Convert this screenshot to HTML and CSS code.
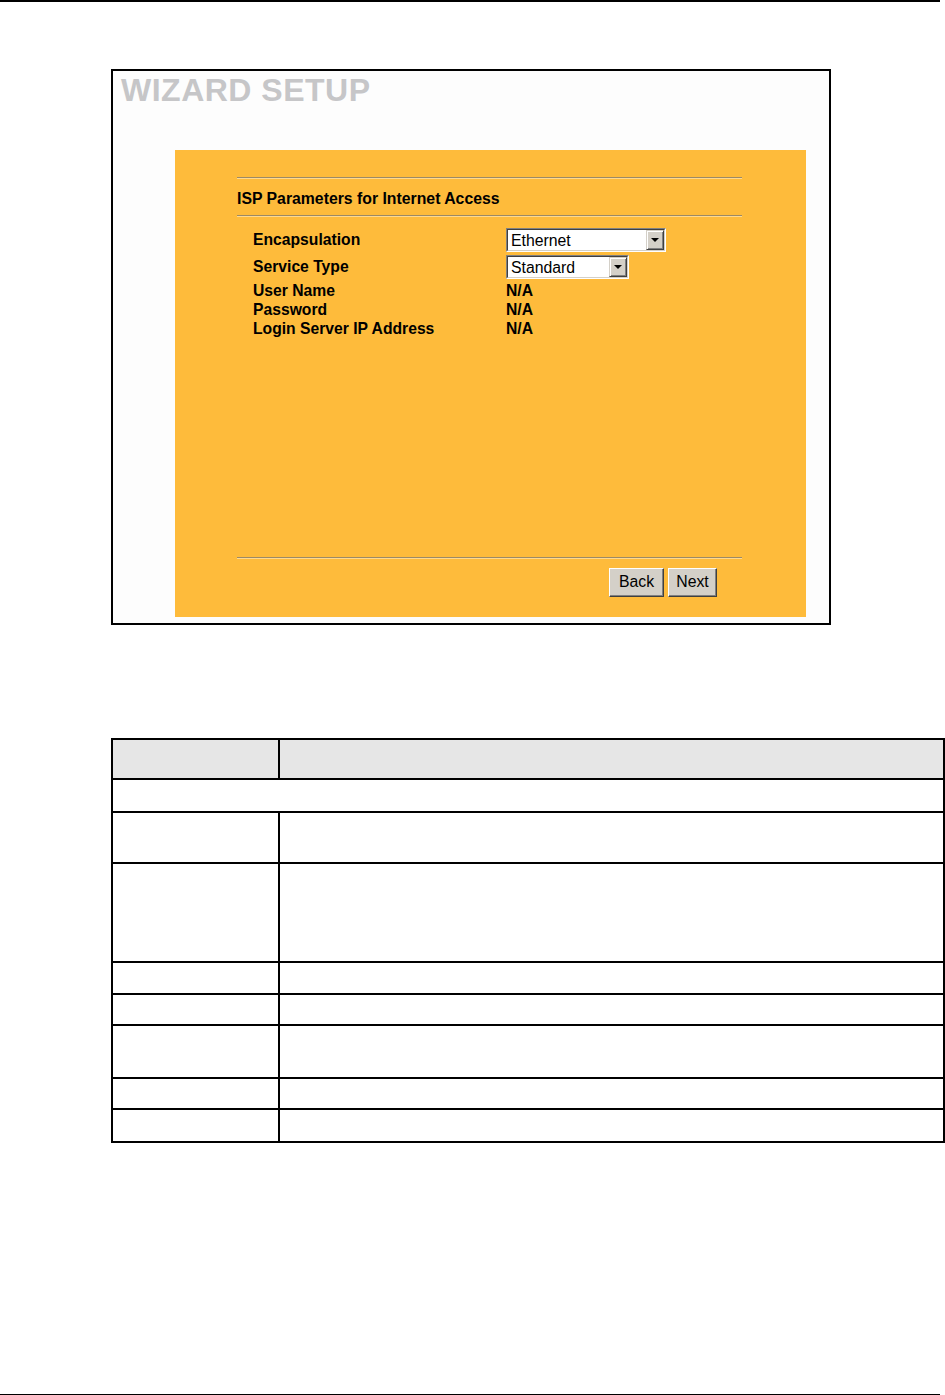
FILE: index.html
```html
<!DOCTYPE html>
<html>
<head>
<meta charset="utf-8">
<link rel="stylesheet" href="styles.css">
</head>
<body>
<div class="page">
  <div class="top-rule"></div>

  <div class="wizard">
    <div class="wizard-title">WIZARD SETUP</div>
    <div class="panel">
      <div class="rule"></div>
      <div class="heading">ISP Parameters for Internet Access</div>
      <div class="rule"></div>
      <div class="form">
        <div class="label sel-row">Encapsulation</div>
        <div class="value sel-row">
          <div class="select w160"><div class="select-in"><span class="select-text">Ethernet</span><span class="drop"><i class="arrow"></i></span></div></div>
        </div>
        <div class="label sel-row second">Service Type</div>
        <div class="value sel-row second">
          <div class="select w123"><div class="select-in"><span class="select-text">Standard</span><span class="drop"><i class="arrow"></i></span></div></div>
        </div>
        <div class="label text-row first-text">User Name</div>
        <div class="value text-row first-text">N/A</div>
        <div class="label text-row">Password</div>
        <div class="value text-row">N/A</div>
        <div class="label text-row">Login Server IP Address</div>
        <div class="value text-row">N/A</div>
      </div>
      <div class="footer">
        <div class="rule"></div>
        <div class="buttons">
          <div class="btn w55">Back</div>
          <div class="btn w49">Next</div>
        </div>
      </div>
    </div>
  </div>

  <table class="desc">
    <tr class="h40 head"><td class="c1"></td><td></td></tr>
    <tr class="h33"><td colspan="2"></td></tr>
    <tr class="h51"><td class="c1"></td><td></td></tr>
    <tr class="h99"><td class="c1"></td><td></td></tr>
    <tr class="h32"><td class="c1"></td><td></td></tr>
    <tr class="h31"><td class="c1"></td><td></td></tr>
    <tr class="h53"><td class="c1"></td><td></td></tr>
    <tr class="h31"><td class="c1"></td><td></td></tr>
    <tr class="h33"><td class="c1"></td><td></td></tr>
  </table>

  <div class="bottom-rule"></div>
</div>
</body>
</html>
```

FILE: styles.css
```css
html, body {
  margin: 0;
  padding: 0;
  background: #ffffff;
}
body {
  font-family: "Liberation Sans", Arial, sans-serif;
  color: #000;
}
.page {
  width: 945px;
  height: 1395px;
  overflow: hidden;
}
.top-rule {
  width: 940px;
  height: 2px;
  background: #000;
}
.wizard {
  margin: 67px 0 0 111px;
  width: 720px;
  height: 556px;
  box-sizing: border-box;
  border: 2px solid #000;
  background: #fdfdfd;
}
.wizard-title {
  margin: 1px 0 0 8px;
  font-size: 32px;
  line-height: 36px;
  font-weight: bold;
  letter-spacing: 0.5px;
  color: #c6c6c8;
}
.panel {
  margin: 42px 0 0 62px;
  width: 631px;
  height: 467px;
  box-sizing: border-box;
  background: #febb3b;
  padding: 27px 64px 20px 62px;
  display: flex;
  flex-direction: column;
}
.rule {
  height: 0;
  border-top: 1px solid #9c8a66;
  border-bottom: 1px solid #ffd98e;
}
.heading {
  margin: 10px 0 7px 0;
  font-size: 15.8px;
  line-height: 19px;
  font-weight: bold;
}
.form {
  margin-top: 11px;
  padding-left: 16px;
  display: grid;
  grid-template-columns: 253px 1fr;
  font-size: 15.7px;
  font-weight: bold;
}
.sel-row {
  height: 24px;
  display: flex;
  align-items: center;
}
.sel-row.second {
  margin-top: 3px;
}
.text-row {
  height: 19px;
  line-height: 19px;
}
.text-row.first-text {
  margin-top: 2px;
}
.select {
  height: 24px;
  box-sizing: border-box;
  border: 1px solid;
  border-color: #808080 #ffffff #ffffff #808080;
  background: #fff;
  display: flex;
}
.w160 { width: 160px; }
.w123 { width: 123px; }
.select-in {
  flex: 1;
  display: flex;
  border: 1px solid;
  border-color: #404040 #d4d0c8 #d4d0c8 #404040;
  background: #fff;
}
.select-text {
  flex: 1;
  padding-left: 3px;
  font-weight: normal;
  font-size: 15.8px;
  line-height: 21px;
}
.drop {
  width: 18px;
  box-sizing: border-box;
  background: #d4d0c8;
  border: 1px solid;
  border-color: #d4d0c8 #404040 #404040 #d4d0c8;
  box-shadow: inset 1px 1px #ffffff, inset -1px -1px #808080;
  display: flex;
  align-items: center;
  justify-content: center;
}
.arrow {
  width: 0;
  height: 0;
  border-left: 4px solid transparent;
  border-right: 4px solid transparent;
  border-top: 4px solid #000;
}
.footer {
  margin-top: auto;
}
.buttons {
  margin-top: 9px;
  display: flex;
  justify-content: flex-end;
  gap: 4px;
  padding-right: 25px;
}
.btn {
  height: 29px;
  box-sizing: border-box;
  background: #d4d0c8;
  border: 1px solid;
  border-color: #ffffff #404040 #404040 #ffffff;
  box-shadow: inset -1px -1px #808080;
  font-size: 15.8px;
  line-height: 26px;
  text-align: center;
}
.w55 { width: 55px; }
.w49 { width: 49px; }

.desc {
  margin: 113px 0 0 111px;
  width: 834px;
  border-collapse: collapse;
  table-layout: fixed;
}
.desc td {
  border: 2px solid #000;
  padding: 0;
}
.desc td.c1 {
  width: 165px;
}
.desc .head td {
  background: #e6e6e6;
}
.h40 { height: 40px; }
.h33 { height: 33px; }
.h51 { height: 51px; }
.h99 { height: 99px; }
.h32 { height: 32px; }
.h31 { height: 31px; }
.h53 { height: 53px; }
.bottom-rule {
  margin-top: 251px;
  width: 940px;
  height: 2px;
  background: #000;
}
```
